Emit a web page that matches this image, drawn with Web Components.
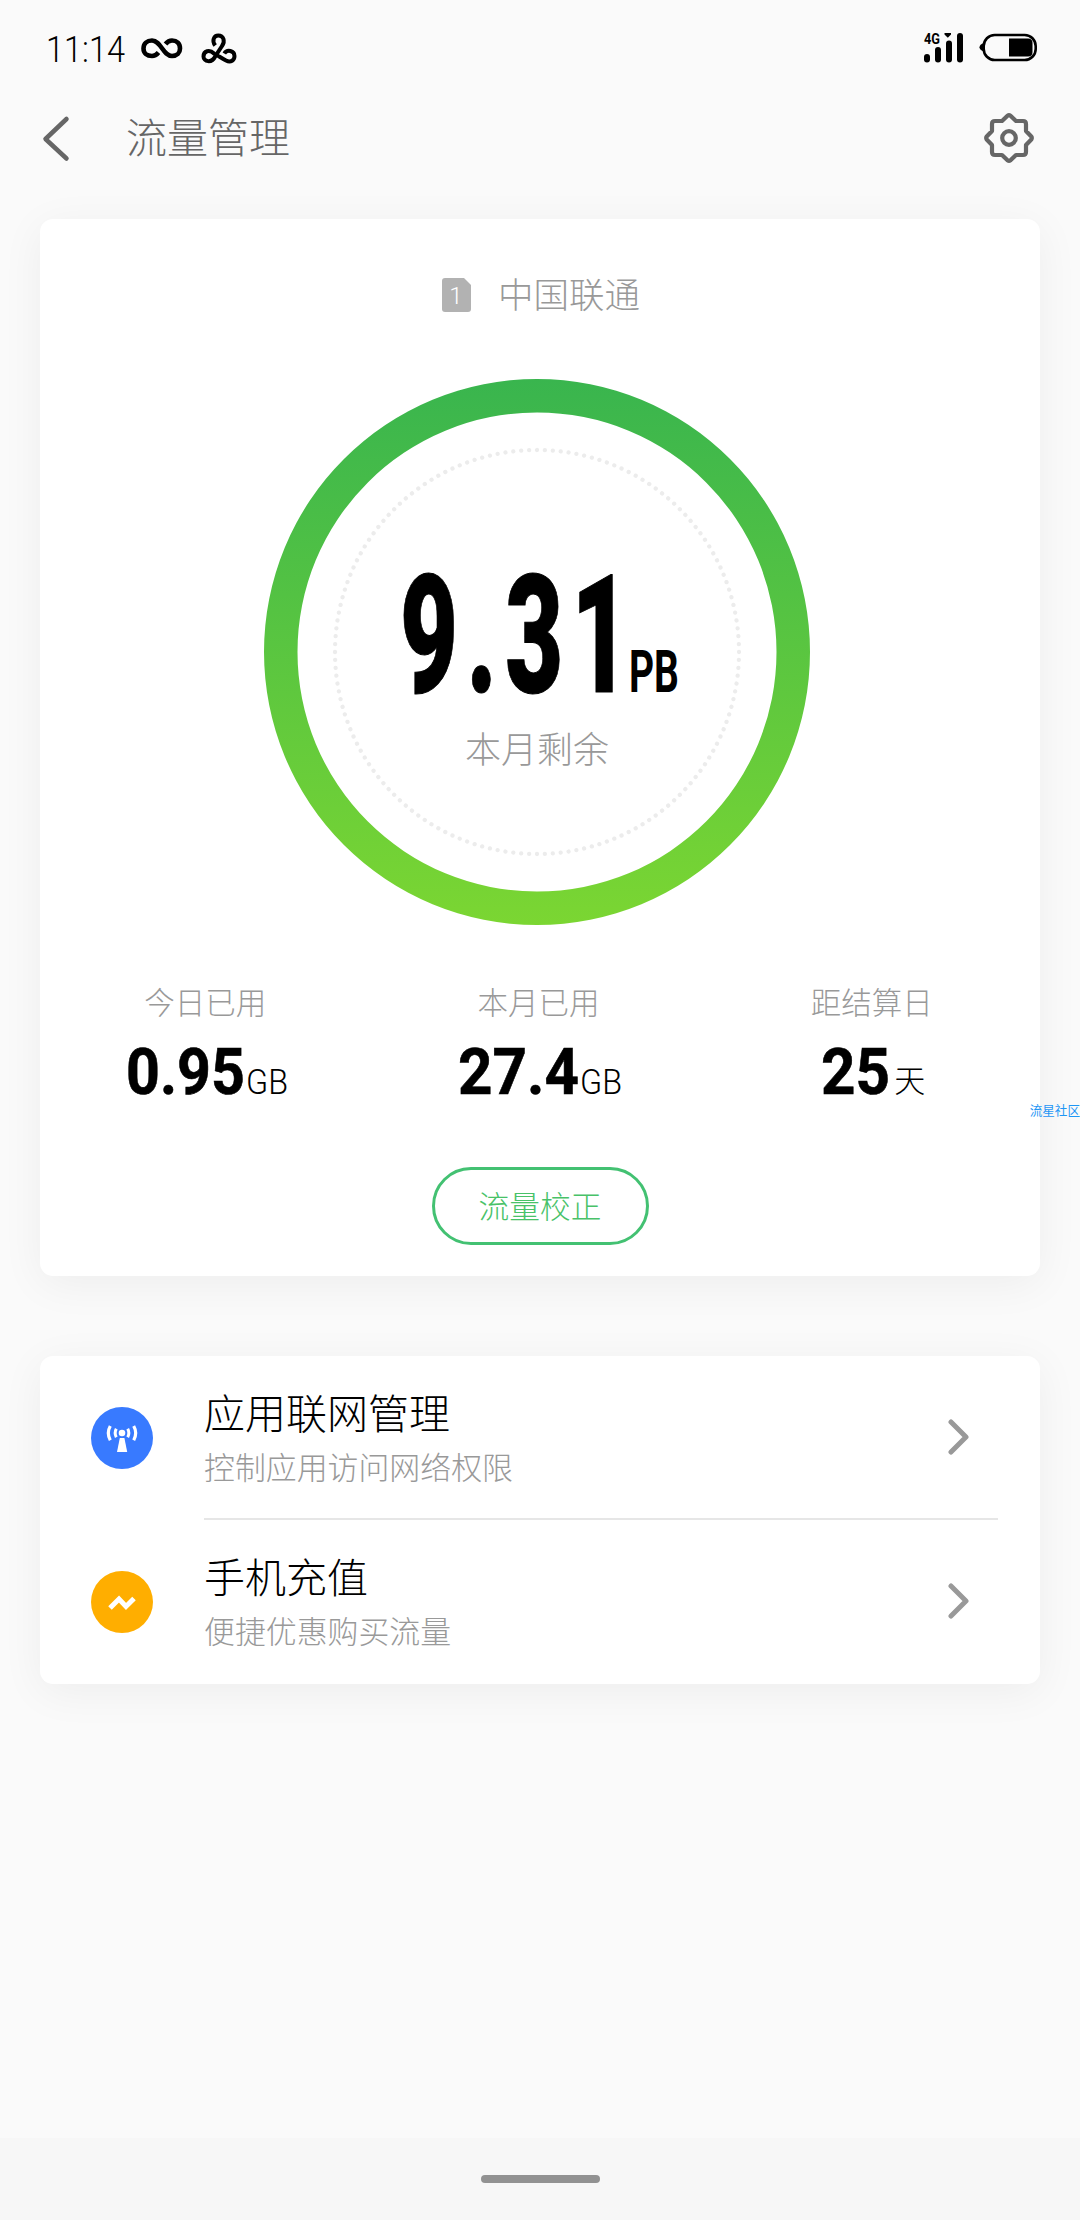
<!DOCTYPE html>
<html lang="zh-CN">
<head>
<meta charset="UTF-8">
<title>流量管理</title>
<style>
    body{
        margin: 0;
        width: 1080px;
        height: 2220px;
        overflow: hidden;
        background: #fafafa;
        font-family: "Noto Sans CJK SC", sans-serif;
        font-weight: 300;
        color: #000;
    }
</style>
</head>
<body>
<phone-screen>
    <status-bar slot="status" time="11:14"></status-bar>
    <title-bar slot="title">流量管理</title-bar>
    <card-box style="--card-height: 1057px">
        <sim-label number="1">中国联通</sim-label>
        <usage-ring value="9.31" unit="PB">本月剩余</usage-ring>
        <stat-list>
            <stat-item value="0.95" width="119" unit="GB">今日已用</stat-item>
            <stat-item value="27.4" width="121" unit="GB">本月已用</stat-item>
            <stat-item value="25" width="69" unit="天">距结算日</stat-item>
        </stat-list>
        <pill-button>流量校正</pill-button>
    </card-box>
    <card-box style="--card-height: 328px">
        <menu-row line h2="应用联网管理" p="控制应用访问网络权限" color="#387aff">
            <svg width="62" height="62" viewBox="0 0 62 62" fill="none" stroke="#fff">
                <circle cx="31" cy="26" r="3.3" fill="#fff" stroke="none"/>
                <path d="M28.8 31h4.6l2.8 14h-10.2z" fill="#fff" stroke="none"/>
                <path d="M25.3 21.8q-2.3 4.2 0 8.4M36.7 21.8q2.3 4.2 0 8.4" stroke-width="3"/>
                <path d="M19.3 19q-4 7 0 14.2M42.7 19q4 7 0 14.2" stroke-width="3.2"/>
            </svg>
        </menu-row>
        <menu-row h2="手机充值" p="便捷优惠购买流量" color="#ffae00">
            <svg width="62" height="62" viewBox="0 0 62 62" fill="none" stroke="#fff" stroke-width="5">
                <path d="M19 37l9-9 7 7.500l8-8"/>
            </svg>
        </menu-row>
    </card-box>
    <nav-handle slot="nav"></nav-handle>
    <water-mark slot="mark">流星社区</water-mark>
</phone-screen>

<script>
class baseTag extends HTMLElement{
    constructor(){
        super()
        this.attachShadow({mode: "open"})
    }
    attr(name){
        return this.getAttribute(name) || ''
    }
    render() {
        const template = document.createElement("template")
        template.innerHTML = `${this.getTemplate()}<style>${this.getStyles()}</style>`
        this.shadowRoot.appendChild(template.content.cloneNode(true));
    }
    connectedCallback() {
        if(!this.shadowRoot.hasChildNodes()){
            this.render();
        }
    }
}

// one line of Roboto squeezed to a given width
class fitText extends baseTag{
    getTemplate(){
        const w = this.attr('width')
        const h = this.attr('height')
        return `
        <svg width="${w}" height="${h}"><text x="0" y="${h}" textLength="${w}" lengthAdjust="spacingAndGlyphs">${this.attr('text')}</text></svg>
        `
    }
    getStyles(){
        return `
        :host{
            display: block;
            font-family: Roboto, sans-serif;
        }
        svg{
            display: block;
            overflow: visible;
        }
        text{
            fill: currentColor;
            stroke: currentColor;
            stroke-width: var(--thick, 0);
        }
        `
    }
}

class phoneScreen extends baseTag{
    getTemplate(){
        return `
        <slot name="status"></slot>
        <slot name="title"></slot>
        <main><slot></slot></main>
        <slot name="nav"></slot>
        <slot name="mark"></slot>
        `
    }
    getStyles(){
        return `
        :host{
            display: flex;
            flex-direction: column;
            position: relative;
            width: 1080px;
            height: 2220px;
            overflow: hidden;
        }
        main{
            flex: 1;
            display: flex;
            flex-direction: column;
            gap: 80px;
            padding: 21px 40px 0;
        }
        `
    }
}

class statusBar extends baseTag{
    getTemplate(){
        return `
        <fit-text class="time" text="${this.attr('time')}" width="79" height="26"></fit-text>
        <svg class="loop" width="42" height="24" viewBox="0 0 42 24" fill="none" stroke="#000" stroke-width="4.600">
            <path d="M17.500 15.500C15 18.500 13.500 19 11 19C6 19 2.500 16 2.500 11.500C2.500 6.500 6 3.500 11 3.500C20 3.500 22 19 31 19C36 19 39 16 39 11.500C39 6.500 36 3.500 31 3.500C28.500 3.500 26.500 4.500 24.500 7"/>
        </svg>
        <svg class="knot" width="36" height="32" viewBox="0 0 36 32" fill="none" stroke="#000" stroke-width="4">
            <path d="M14.200 12.500C10.500 7.500 13 2.500 17.300 2.500C22.500 2.500 24.500 8 21 13L14.500 23C10.500 31 2.500 28.500 2.500 23.500C2.500 18 8.500 16 13 20.500C17 22.500 21 25.500 25 27.500C30 30 33.500 27 33.500 23C33.500 17.500 26 16 23.300 20.500"/>
        </svg>
        <span></span>
        <svg class="signal" width="40" height="30" viewBox="0 0 40 30">
            <text x="0" y="10.500" textLength="16" lengthAdjust="spacingAndGlyphs">4G</text>
            <path d="M20.500 0h6.500v1.500l-3.200 3.200l-3.300-3.200z"/>
            <rect x="0" y="21" width="6" height="8.500" rx="3"/>
            <rect x="11" y="14" width="6" height="15.500" rx="3"/>
            <rect x="22" y="7.500" width="6" height="22" rx="3"/>
            <rect x="33" y="0" width="6" height="29.500" rx="3"/>
        </svg>
        <svg class="battery" width="60" height="30" viewBox="0 0 60 30">
            <path d="M5 10c-6 1.500-6 7 0 8.500z"/>
            <rect x="4.700" y="2" width="52" height="25" rx="11" fill="none" stroke="#000" stroke-width="2.600"/>
            <path d="M30 5.500h19q4.500 0 4.500 4.500v9q0 4.500-4.500 4.500h-19z"/>
        </svg>
        `
    }
    getStyles(){
        return `
        :host{
            display: flex;
            align-items: flex-start;
            box-sizing: border-box;
            height: 98px;
            padding: 33px 41px 0 46px;
        }
        span{ flex: 1; }
        .time{
            font-size: 37px;
            font-weight: 300;
            padding-top: 3px;
        }
        .loop{
            margin: 4px 0 0 16px;
        }
        .knot{ margin-left: 18px; }
        .signal{ overflow: visible; }
        .signal text{
            font: 700 14.500px Roboto, sans-serif;
        }
        .battery{ margin-left: 15px; }
        `
    }
}

class titleBar extends baseTag{
    getTemplate(){
        return `
        <svg width="28" height="48" viewBox="0 0 28 48" fill="none" stroke="#666" stroke-width="4.500" stroke-linecap="round" stroke-linejoin="round">
            <path d="M24.500 5L3.500 25L24.500 44.500"/>
        </svg>
        <h1><slot></slot></h1>
        <svg width="54" height="54" viewBox="-27 -27 54 54" fill="none" stroke="#666" stroke-width="4.200" stroke-linejoin="round">
            <path d="M-1.500-22.300Q0-23.300 1.500-22.300L7-17H14Q17-17 17-14V-7L22.300-1.500Q23.300 0 22.300 1.500L17 7V14Q17 17 14 17H7L1.500 22.300Q0 23.300-1.500 22.300L-7 17H-14Q-17 17-17 14V7L-22.300 1.500Q-23.300 0-22.300-1.500L-17-7V-14Q-17-17-14-17H-7Z"/>
            <circle r="6.800"/>
        </svg>
        `
    }
    getStyles(){
        return `
        :host{
            display: flex;
            align-items: center;
            height: 80px;
            margin-bottom: 20px;
            padding: 0 44px 0 42px;
        }
        h1{
            flex: 1;
            margin: 0 0 6px 56px;
            font-size: 41px;
            font-weight: 300;
            line-height: 60px;
            color: #666;
        }
        `
    }
}

class cardBox extends baseTag{
    getTemplate(){
        return `<slot></slot>`
    }
    getStyles(){
        return `
        :host{
            display: flex;
            flex-direction: column;
            align-items: center;
            flex: none;
            height: var(--card-height);
            background: #fff;
            border-radius: 13px;
            box-shadow: 0 8px 44px rgba(0,0,0,0.055);
        }
        `
    }
}

class simLabel extends baseTag{
    getTemplate(){
        return `
        <svg width="30" height="34" viewBox="0 0 30 34">
            <path d="M3 0H22L29 7V31Q29 34 26 34H3Q0 34 0 31V3Q0 0 3 0Z" fill="#b2b2b2"/>
            <text x="14" y="25.500" text-anchor="middle" fill="#fff">${this.attr('number')}</text>
        </svg>
        <p><slot></slot></p>
        `
    }
    getStyles(){
        return `
        :host{
            display: flex;
            align-items: center;
            gap: 26px;
            height: 52px;
            margin-top: 50px;
            padding-left: 2px;
            font-size: 35.500px;
            line-height: 52px;
            color: #999;
        }
        p{ margin: 0 0 5px; }
        text{ font: 300 24px Roboto, sans-serif; }
        `
    }
}

class usageRing extends baseTag{
    getTemplate(){
        return `
        <svg class="ring" width="546" height="546" viewBox="0 0 546 546" fill="none">
            <defs>
                <linearGradient id="g" x1="0" y1="0" x2="0" y2="1">
                    <stop offset="0" stop-color="#39b54e"/>
                    <stop offset="1" stop-color="#7bd632"/>
                </linearGradient>
            </defs>
            <path fill="url(#g)" fill-rule="evenodd" d="M273 0a273 273 0 1 1 0 546a273 273 0 1 1 0-546zM273 33.500a239.500 239.500 0 1 0 0 479a239.500 239.500 0 1 0 0-479z"/>
            <circle cx="273" cy="273" r="202" stroke="#ececec" stroke-width="4.300" stroke-linecap="round" pathLength="1600" stroke-dasharray="0.01 9.990"/>
        </svg>
        <div>
            <section>
                <fit-text class="value" text="${this.attr('value')}" width="238" height="118"></fit-text>
                <fit-text class="unit" text="${this.attr('unit')}" width="50" height="42"></fit-text>
            </section>
            <p><slot></slot></p>
        </div>
        `
    }
    getStyles(){
        return `
        :host{
            display: grid;
            width: 546px;
            height: 546px;
            margin: 58px 6px 0 0;
        }
        .ring, div{ grid-area: 1 / 1; }
        section{
            display: flex;
            align-items: flex-end;
            padding: 195px 0 0 136px;
        }
        .value{
            font-size: 166px;
            font-weight: 900;
            letter-spacing: 14px;
            --thick: 1px;
        }
        .unit{
            font-size: 59px;
            font-weight: 700;
            margin-left: -9px;
        }
        p{
            margin: 28px 0 0;
            text-align: center;
            font-size: 36px;
            line-height: 54px;
            color: #999;
        }
        `
    }
}

class statList extends baseTag{
    getTemplate(){
        return `<slot></slot>`
    }
    getStyles(){
        return `
        :host{
            display: grid;
            grid-template-columns: repeat(3, 1fr);
            width: 100%;
            margin-top: 54px;
        }
        `
    }
}

class statItem extends baseTag{
    getTemplate(){
        const unit = this.attr('unit')
        const unitTag = unit === 'GB'
            ? `<fit-text class="unit" text="GB" width="42" height="25"></fit-text>`
            : `<b>${unit}</b>`
        return `
        <p><slot></slot></p>
        <div>
            <fit-text class="value" text="${this.attr('value')}" width="${this.attr('width')}" height="46"></fit-text>
            ${unitTag}
        </div>
        `
    }
    getStyles(){
        return `
        :host{
            display: flex;
            flex-direction: column;
            align-items: center;
        }
        p{
            margin: 0;
            padding-right: 3px;
            font-size: 30.500px;
            line-height: 44px;
            color: #999;
        }
        div{
            display: flex;
            align-items: flex-end;
            height: 46px;
            margin-top: 25px;
        }
        .value{
            font-size: 64.500px;
            font-weight: 700;
            --thick: 0.6px;
        }
        .unit{
            font-size: 35px;
            font-weight: 300;
            margin-left: 1px;
        }
        b{
            margin: 0 0 -8px 4px;
            font-size: 31px;
            font-weight: 300;
            line-height: 46px;
        }
        `
    }
}

class pillButton extends baseTag{
    getTemplate(){
        return `<button><slot></slot></button>`
    }
    getStyles(){
        return `
        :host{
            display: block;
            margin-top: 73px;
        }
        button{
            display: block;
            box-sizing: border-box;
            width: 217px;
            height: 78px;
            padding: 0 0 4px;
            border: 3.500px solid #43c172;
            border-radius: 39px;
            background: none;
            font: inherit;
            font-size: 30.700px;
            color: #48c268;
        }
        `
    }
}

class menuRow extends baseTag{
    getTemplate(){
        return `
        <i style="background: ${this.attr('color')}"><slot></slot></i>
        <section>
            <div>
                <h2>${this.attr('h2')}</h2>
                <p>${this.attr('p')}</p>
            </div>
            <svg width="22" height="38" viewBox="0 0 22 38" fill="none" stroke="#999" stroke-width="5" stroke-linecap="round" stroke-linejoin="round">
                <path d="M3 4L18 19L3 34"/>
            </svg>
        </section>
        `
    }
    getStyles(){
        return `
        :host{
            display: flex;
            align-items: center;
            align-self: stretch;
            height: 164px;
            padding: 0 42px 0 51px;
        }
        i{
            width: 62px;
            height: 62px;
            border-radius: 50%;
        }
        section{
            flex: 1;
            display: flex;
            align-items: center;
            justify-content: space-between;
            box-sizing: border-box;
            height: 164px;
            margin-left: 51px;
            padding-right: 28px;
            border-bottom: 2px solid transparent;
        }
        :host([line]) section{
            border-bottom-color: #e6e6e6;
        }
        h2{
            margin: 0;
            font-size: 41px;
            font-weight: 300;
            line-height: 60px;
        }
        p{
            margin: 2px 0 4px;
            font-size: 30.900px;
            line-height: 46px;
            color: #999;
        }
        `
    }
}

class navHandle extends baseTag{
    getTemplate(){
        return `<div></div>`
    }
    getStyles(){
        return `
        :host{
            display: flex;
            justify-content: center;
            align-items: center;
            height: 82px;
            background: #f7f7f7;
        }
        div{
            width: 119px;
            height: 8px;
            border-radius: 4px;
            background: #929292;
        }
        `
    }
}

class waterMark extends baseTag{
    getTemplate(){
        return `<slot></slot>`
    }
    getStyles(){
        return `
        :host{
            position: absolute;
            right: 0;
            top: 1101px;
            font-size: 12.600px;
            line-height: 18px;
            font-weight: 400;
            color: #1e96f5;
        }
        `
    }
}

customElements.define("fit-text", fitText);
customElements.define("phone-screen", phoneScreen);
customElements.define("status-bar", statusBar);
customElements.define("title-bar", titleBar);
customElements.define("card-box", cardBox);
customElements.define("sim-label", simLabel);
customElements.define("usage-ring", usageRing);
customElements.define("stat-list", statList);
customElements.define("stat-item", statItem);
customElements.define("pill-button", pillButton);
customElements.define("menu-row", menuRow);
customElements.define("nav-handle", navHandle);
customElements.define("water-mark", waterMark);
</script>
</body>
</html>
